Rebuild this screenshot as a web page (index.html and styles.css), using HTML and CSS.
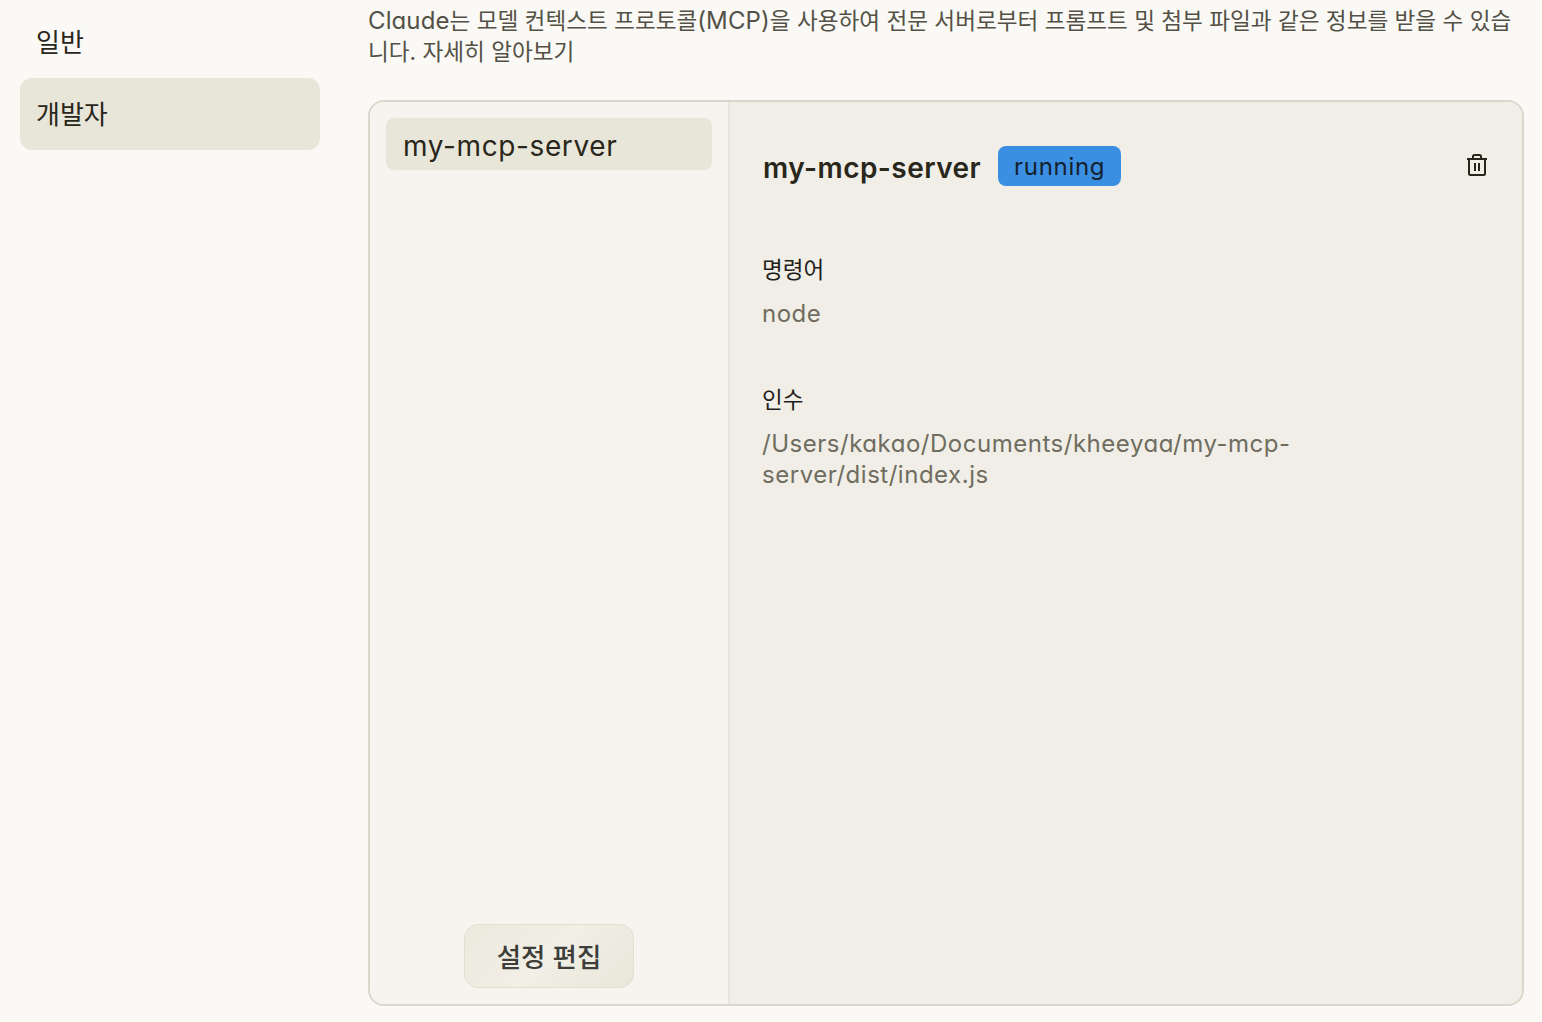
FILE: index.html
```html
<!DOCTYPE html>
<html lang="ko">

<head>
  <meta charset="UTF-8">
  <meta name="viewport" content="width=device-width, initial-scale=1.0">
  <title>Claude 개발자 설정</title>
  <link rel="stylesheet" href="styles.css">
</head>

<body>
  <div class="page">
    <nav class="sidebar">
      <a class="nav-item">일반</a>
      <a class="nav-item active">개발자</a>
    </nav>

    <main class="content">
      <p class="intro"><span class="latin">Claude</span>는 모델 컨텍스트 프로토콜<span class="latin">(MCP)</span>을 사용하여 전문 서버로부터 프롬프트 및 첨부 파일과 같은 정보를 받을 수 있습<span>니다. 자세히 알아보기</span></p>

      <section class="panel">
        <div class="server-list">
          <div class="server-item">my-mcp-server</div>
          <button class="edit-btn">설정 편집</button>
        </div>

        <div class="server-detail">
          <div class="detail-head">
            <h2 class="server-name">my-mcp-server</h2>
            <span class="badge">running</span>
            <!-- trash icon -->
            <svg class="trash" width="24" height="24" viewBox="0 0 24 24" fill="none" stroke="#29261b" stroke-width="2">
              <path d="M2 6h20" />
              <path d="M8 6V3.500C8 2.600 8.600 2 9.500 2h5c.9 0 1.500.6 1.500 1.500V6" />
              <path d="M4 6v14.500C4 21.400 4.600 22 5.500 22h13c.9 0 1.500-.6 1.500-1.500V6" />
              <path d="M10 10v8M14 10v8" />
            </svg>
          </div>

          <div class="field field-command">
            <div class="field-label">명령어</div>
            <div class="field-value">node</div>
          </div>

          <div class="field field-args">
            <div class="field-label">인수</div>
            <div class="field-value">/Users/kakao/Documents/kheeyaa/my-mcp-server/dist/index.js</div>
          </div>
        </div>
      </section>
    </main>
  </div>
</body>

</html>
```

FILE: styles.css
```css
* {
  box-sizing: border-box;
}

html,
body {
  margin: 0;
  height: 100%;
  overflow: hidden;
}

body {
  background: #faf9f5;
  color: #29261b;
  font-family: Inter, "Noto Sans CJK KR", sans-serif;
  /* single-story a */
  font-feature-settings: "cv11";
}

.page {
  display: flex;
  height: 1022px;
}

.sidebar {
  width: 368px;
  flex-shrink: 0;
  padding: 6px 48px 0 20px;
}

.nav-item {
  display: flex;
  align-items: center;
  height: 72px;
  padding: 0 16px 3px;
  border-radius: 12px;
  font-size: 26px;
}

.nav-item.active {
  background: #e8e6d9;
}

.content {
  width: 1156px;
  display: flex;
  flex-direction: column;
  padding-bottom: 16px;
}

.intro {
  margin: 5px 0 32px;
  height: 63px;
  font-size: 22.600px;
  line-height: 31px;
  color: #535146;
}

.latin {
  font-size: 24px;
  letter-spacing: 0.1px;
}

.panel {
  flex: 1;
  display: flex;
  border: 2px solid #d8d7cc;
  border-radius: 16px;
  overflow: hidden;
}

.server-list {
  width: 360px;
  display: flex;
  flex-direction: column;
  align-items: center;
  justify-content: space-between;
  padding: 16px;
  background: #f5f4ee;
  border-right: 2px solid #e8e6dc;
}

.server-item {
  width: 100%;
  height: 52px;
  display: flex;
  align-items: center;
  padding: 4px 17px 0;
  border-radius: 8px;
  background: #e8e6d9;
  font-size: 28px;
  letter-spacing: 0.62px;
}

.edit-btn {
  width: 170px;
  height: 64px;
  padding-bottom: 3px;
  border: 1px solid #e3e0d0;
  border-radius: 14px;
  background: linear-gradient(135deg, #ece9dd, #f1efe6 50%, #e9e6d9);
  color: #3d3d3a;
  font-family: inherit;
  font-size: 26.500px;
  font-weight: 500;
}

.server-detail {
  flex: 1;
  padding: 44px 32px 0;
  background: #f0eee6;
}

.detail-head {
  display: flex;
  align-items: center;
  height: 40px;
}

.server-name {
  margin: 0 17px 0 1px;
  padding-top: 4px;
  font-size: 28px;
  font-weight: 600;
  letter-spacing: 0.45px;
}

.badge {
  height: 40px;
  display: flex;
  align-items: center;
  padding: 0 16px;
  border-radius: 8px;
  background: #3b8fe3;
  color: #14202b;
  font-size: 24px;
  letter-spacing: 0.7px;
}

.trash {
  margin-left: auto;
  margin-right: 1px;
  margin-bottom: 2px;
}

.field {
  width: 560px;
}

.field-command {
  margin-top: 66px;
}

.field-args {
  margin-top: 53px;
}

.field-label {
  font-size: 22.500px;
  line-height: 36px;
  color: #1f1e1a;
}

.field-value {
  margin-top: 10px;
  font-size: 24px;
  line-height: 31px;
  letter-spacing: 0.52px;
  color: #6f6c60;
}
```
